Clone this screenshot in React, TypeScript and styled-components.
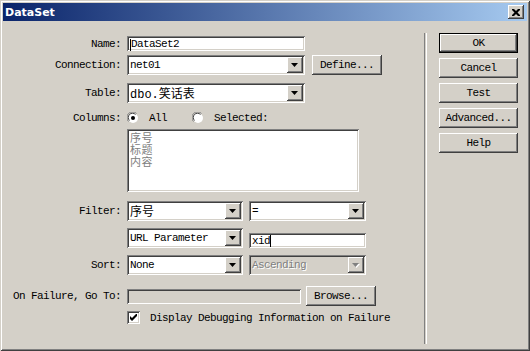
import React from 'react'
import styled, { createGlobalStyle } from 'styled-components'

const GlobalStyle = createGlobalStyle`
  html, body { margin: 0; padding: 0; background: #d4d0c8; overflow: hidden; }
`

const mono = `"Liberation Mono", "Noto Sans CJK SC", monospace`
const raised = `box-shadow: inset -1px -1px #404040, inset 1px 1px #ffffff, inset -2px -2px #808080, inset 2px 2px #d4d0c8;`
const sunken = `box-shadow: inset 1px 1px #808080, inset -1px -1px #ffffff, inset 2px 2px #404040, inset -2px -2px #d4d0c8;`

const Window = styled.div`
  width: 530px;
  height: 351px;
  box-sizing: border-box;
  padding: 3px;
  background: #d4d0c8;
  box-shadow: inset 1px 1px #d4d0c8, inset -1px -1px #404040, inset 2px 2px #ffffff, inset -2px -2px #808080;
  display: flex;
  flex-direction: column;
  font-family: ${mono};
  font-size: 11px;
  letter-spacing: -0.6px;
  color: #000;
`

const TitleBar = styled.div`
  height: 18px;
  flex: none;
  display: flex;
  align-items: center;
  padding: 0 3px 0 2px;
  background: linear-gradient(to right, #0a246a, #a6caf0);
`

const TitleText = styled.span`
  font-family: "DejaVu Sans", Verdana, sans-serif;
  font-weight: bold;
  font-size: 11px;
  letter-spacing: 0;
  color: #fff;
`

const CloseButton = styled.div`
  margin-left: auto;
  width: 16px;
  height: 14px;
  background: #d4d0c8;
  ${raised}
  display: flex;
  align-items: center;
  justify-content: center;
`

const Body = styled.div`
  flex: 1;
  display: flex;
`

const Form = styled.div`
  width: 421px;
  padding-top: 15px;
  display: flex;
  flex-direction: column;
`

const Row = styled.div<{ $mt: number; $h: number }>`
  margin-top: ${p => p.$mt}px;
  height: ${p => p.$h}px;
  display: flex;
  align-items: center;
`

const Label = styled.div`
  width: 118px;
  margin-right: 6px;
  text-align: right;
  white-space: nowrap;
  flex: none;
`

const TextField = styled.div<{ $w: number; $offset?: number; $ml?: number; $disabled?: boolean }>`
  width: ${p => p.$w}px;
  height: 15px;
  box-sizing: border-box;
  padding: 2px 3px 0;
  margin-top: ${p => p.$offset ?? 0}px;
  margin-left: ${p => p.$ml ?? 0}px;
  background: ${p => (p.$disabled ? '#d4d0c8' : '#fff')};
  ${sunken}
  display: flex;
  align-items: center;
  white-space: nowrap;
  line-height: 11px;
  flex: none;
`

const Caret = styled.span`
  display: inline-block;
  width: 1px;
  height: 12px;
  background: #000;
`

const SelectBox = styled.div<{ $w: number; $ml?: number; $disabled?: boolean }>`
  width: ${p => p.$w}px;
  height: 20px;
  box-sizing: border-box;
  padding: 2px;
  margin-left: ${p => p.$ml ?? 0}px;
  background: ${p => (p.$disabled ? '#d4d0c8' : '#fff')};
  ${sunken}
  display: flex;
  align-items: center;
  flex: none;
`

const SelectValue = styled.span<{ $disabled?: boolean; $cjk?: boolean }>`
  flex: 1;
  padding-left: 1px;
  white-space: nowrap;
  color: ${p => (p.$disabled ? '#808080' : '#000')};
  text-shadow: ${p => (p.$disabled ? '1px 1px #fff' : 'none')};
  font-size: ${p => (p.$cjk ? '12px' : '11px')};
  letter-spacing: ${p => (p.$cjk ? '0' : '-0.6px')};
`

const DropButton = styled.span`
  width: 16px;
  height: 16px;
  flex: none;
  background: #d4d0c8;
  ${raised}
  display: flex;
  align-items: center;
  justify-content: center;
`

const Button = styled.div<{ $w: number; $default?: boolean; $ml?: number }>`
  width: ${p => p.$w}px;
  height: 20px;
  box-sizing: border-box;
  margin-left: ${p => p.$ml ?? 0}px;
  background: #d4d0c8;
  flex: none;
  display: flex;
  align-items: center;
  justify-content: center;
  border: ${p => (p.$default ? '1px solid #000' : 'none')};
  ${raised}
`

const RadioGroup = styled.div`
  display: flex;
  align-items: center;
`

const RadioOption = styled.div`
  display: flex;
  align-items: center;
  margin-right: 25px;
`

const RadioCircle = styled.span`
  width: 12px;
  height: 12px;
  margin-right: 10px;
  flex: none;
  display: block;
`

const ListBox = styled.div`
  width: 232px;
  height: 63px;
  box-sizing: border-box;
  padding: 2px 3px;
  background: #fff;
  ${sunken}
  font-family: "Noto Sans CJK SC", sans-serif;
  font-size: 11px;
  letter-spacing: 0.5px;
  color: #808080;
`

const ListItem = styled.div`
  height: 12px;
  line-height: 12px;
`

const CheckBox = styled.span`
  width: 13px;
  height: 13px;
  box-sizing: border-box;
  background: #fff;
  ${sunken}
  display: flex;
  align-items: center;
  justify-content: center;
  margin-right: 10px;
  flex: none;
`

const Separator = styled.div`
  width: 1px;
  margin: 12px 0 4px;
  border-left: 1px solid #808080;
  border-right: 1px solid #fff;
`

const ButtonColumn = styled.div`
  padding: 12px 0 0 12px;
  display: flex;
  flex-direction: column;
  gap: 5px;
`

const Arrow: React.FC<{ disabled?: boolean }> = ({ disabled }) => (
  <svg width="8" height="5" viewBox="0 0 8 5">
    {disabled && <path d="M1 1h7l-3.5 4z" fill="#fff" />}
    <path d="M0 0h7l-3.5 4z" fill={disabled ? '#808080' : '#000'} />
  </svg>
)

const Select: React.FC<{ w: number; ml?: number; value: string; disabled?: boolean; cjk?: boolean }> = ({
  w,
  ml,
  value,
  disabled,
  cjk,
}) => (
  <SelectBox $w={w} $ml={ml} $disabled={disabled}>
    <SelectValue $disabled={disabled} $cjk={cjk}>{value}</SelectValue>
    <DropButton><Arrow disabled={disabled} /></DropButton>
  </SelectBox>
)

const Radio: React.FC<{ checked?: boolean }> = ({ checked }) => (
  <RadioCircle>
    <svg width="12" height="12" viewBox="0 0 12 12">
      <circle cx="6" cy="6" r="5" fill="#fff" />
      <path d="M1.5 9.5 A5 5 0 0 1 9.5 1.5" stroke="#808080" strokeWidth="1" fill="none" />
      <path d="M2.5 8.5 A4 4 0 0 1 8.5 2.5" stroke="#404040" strokeWidth="1" fill="none" />
      <path d="M3 10.8 A5 5 0 0 0 10.8 3" stroke="#d4d0c8" strokeWidth="1" fill="none" />
      {checked && <circle cx="6" cy="6" r="2" fill="#000" />}
    </svg>
  </RadioCircle>
)

const App: React.FC = () => {
  return (
    <>
      <GlobalStyle />
      <Window>
        <TitleBar>
          <TitleText>DataSet</TitleText>
          <CloseButton>
            <svg width="8" height="7" viewBox="0 0 8 7">
              <path d="M0 0h2l2 2 2-2h2v1l-2.5 2.5L8 6v1H6L4 5 2 7H0V6l2.5-2.5L0 1z" fill="#000" />
            </svg>
          </CloseButton>
        </TitleBar>
        <Body>
          <Form>
            <Row $mt={0} $h={15}>
              <Label>Name:</Label>
              <TextField $w={178}><Caret />DataSet2</TextField>
            </Row>
            <Row $mt={4} $h={20}>
              <Label>Connection:</Label>
              <Select w={178} value="net01" />
              <Button $w={70} $ml={7}>Define...</Button>
            </Row>
            <Row $mt={8} $h={20}>
              <Label>Table:</Label>
              <Select w={178} value="dbo.笑话表" cjk />
            </Row>
            <Row $mt={8} $h={13}>
              <Label>Columns:</Label>
              <RadioGroup>
                <RadioOption>
                  <Radio checked />
                  All
                </RadioOption>
                <RadioOption>
                  <Radio />
                  Selected:
                </RadioOption>
              </RadioGroup>
            </Row>
            <Row $mt={5} $h={63}>
              <Label />
              <ListBox>
                <ListItem>序号</ListItem>
                <ListItem>标题</ListItem>
                <ListItem>内容</ListItem>
              </ListBox>
            </Row>
            <Row $mt={9} $h={20}>
              <Label>Filter:</Label>
              <Select w={116} value="序号" cjk />
              <Select w={117} ml={6} value="=" />
            </Row>
            <Row $mt={7} $h={20}>
              <Label />
              <Select w={116} value="URL Parameter" />
              <TextField $w={117} $ml={6} $offset={4}>xid<Caret /></TextField>
            </Row>
            <Row $mt={7} $h={20}>
              <Label>Sort:</Label>
              <Select w={116} value="None" />
              <Select w={117} ml={6} value="Ascending" disabled />
            </Row>
            <Row $mt={11} $h={20}>
              <Label>On Failure, Go To:</Label>
              <TextField $w={174} $disabled />
              <Button $w={70} $ml={5}>Browse...</Button>
            </Row>
            <Row $mt={5} $h={13}>
              <Label />
              <CheckBox>
                <svg width="7" height="7" viewBox="0 0 7 7">
                  <path d="M0 2v3l2 2 5-5V-1L2 4z" fill="#000" />
                </svg>
              </CheckBox>
              Display Debugging Information on Failure
            </Row>
          </Form>
          <Separator />
          <ButtonColumn>
            <Button $w={79} $default>OK</Button>
            <Button $w={79}>Cancel</Button>
            <Button $w={79}>Test</Button>
            <Button $w={79}>Advanced...</Button>
            <Button $w={79}>Help</Button>
          </ButtonColumn>
        </Body>
      </Window>
    </>
  )
}

export default App
